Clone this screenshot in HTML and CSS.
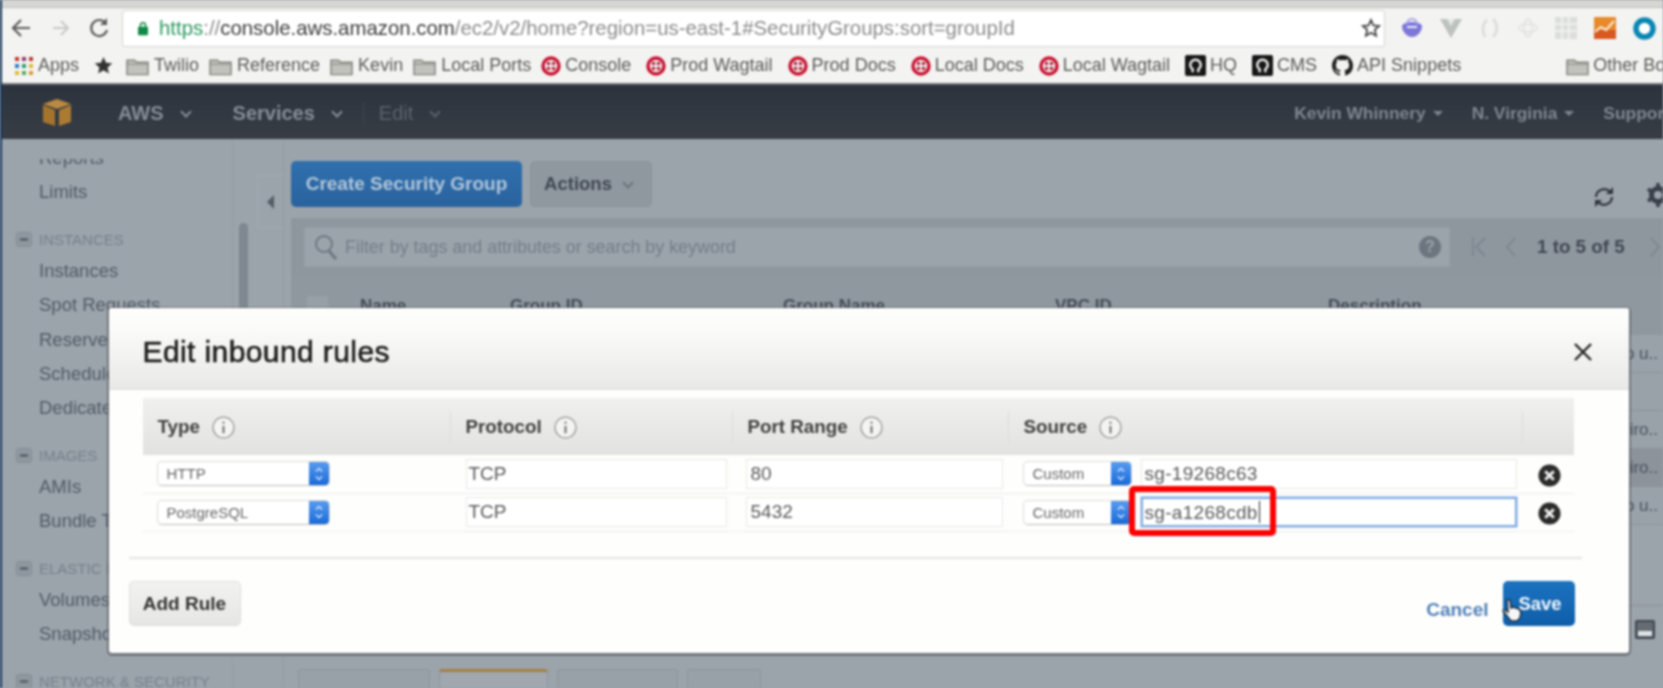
FILE: index.html
```html
<!DOCTYPE html>
<html lang="en">
<head>
  <meta charset="UTF-8" />
  <title>Security Groups | EC2 Management Console</title>
  <link rel="stylesheet" href="styles.css">
</head>
<body>
  <svg class="defs" width="0" height="0">
    <symbol id="folder" viewBox="0 0 24 20">
      <path d="M1 4h8l2 2h12v13H1z" fill="#c2c2bd" stroke="#85857f" stroke-width="1.5"/>
      <path d="M1 8h22" stroke="#85857f" stroke-width="1"/>
    </symbol>
    <symbol id="twilio" viewBox="0 0 20 20">
      <circle cx="10" cy="10" r="8" fill="#f4eeee" stroke="#c8102e" stroke-width="3.4"/>
      <circle cx="7.5" cy="7.5" r="1.7" fill="#a5142c"/>
      <circle cx="12.5" cy="7.5" r="1.7" fill="#a5142c"/>
      <circle cx="7.5" cy="12.5" r="1.7" fill="#a5142c"/>
      <circle cx="12.5" cy="12.5" r="1.7" fill="#a5142c"/>
    </symbol>
    <symbol id="hub" viewBox="0 0 22 22">
      <rect width="22" height="22" rx="2" fill="#161616"/>
      <path d="M8 18v-3a5.5 5.5 0 1 1 6 0v3" fill="none" stroke="#eee" stroke-width="2.6"/>
    </symbol>
    <symbol id="info" viewBox="0 0 22 22">
      <circle cx="11" cy="11" r="10" fill="#f4f4f2" stroke="#9a9a98" stroke-width="1.2"/>
      <path d="M11 5.5v2M11 9.5v7" stroke="#555" stroke-width="1.6"/>
    </symbol>
    <symbol id="remove" viewBox="0 0 24 24">
      <circle cx="12" cy="12" r="11.5" fill="#2b2b2b"/>
      <path d="M7.5 7.5l9 9M16.500 7.500l-9 9" stroke="#f2f2f2" stroke-width="3"/>
    </symbol>
    <symbol id="updown" viewBox="0 0 20 26">
      <path d="M6 10l4-4 4 4M6 16l4 4 4-4" fill="none" stroke="#cfe2fb" stroke-width="1.8"/>
    </symbol>
    <symbol id="minus" viewBox="0 0 16 15">
      <rect x=".5" y=".5" width="15" height="14" rx="2" fill="#8f979f" stroke="#848c95"/>
      <path d="M4 7.500h8" stroke="#4a515a" stroke-width="2"/>
    </symbol>
  </svg>

  <div class="tabstrip"></div>

  <div class="toolbar">
    <svg class="tool-icon" width="20" height="20" viewBox="0 0 20 20"><path d="M19 10H3M10 2l-8 8 8 8" fill="none" stroke="#5d5d5d" stroke-width="2.200"/></svg>
    <svg class="tool-icon fwd" width="18" height="20" viewBox="0 0 18 20"><path d="M1 10h15M9 3l7 7-7 7" fill="none" stroke="#c8c8c8" stroke-width="1.800"/></svg>
    <svg class="tool-icon reload" width="20" height="22" viewBox="0 0 20 22"><path d="M16.500 6A8 8 0 1 0 18 13" fill="none" stroke="#5d5d5d" stroke-width="2.200"/><path d="M18 1v7h-7z" fill="#5d5d5d"/></svg>
    <div class="address">
      <svg class="lock" width="10" height="15" viewBox="0 0 12 16"><rect y="6" width="12" height="10" rx="1" fill="#0f8a45"/><path d="M3 7V4a3 3 0 0 1 6 0v3" fill="none" stroke="#0f8a45" stroke-width="1.800"/></svg>
      <span class="url"><span class="url-green">https</span><span class="url-dim">://</span>console.aws.amazon.com<span class="url-dim">/ec2/v2/home?region=us-east-1#SecurityGroups:sort=groupId</span></span>
      <svg class="url-star" width="20" height="20" viewBox="0 0 20 20"><path d="M10 2l2.400 5.400 5.800.600-4.400 3.900 1.300 5.800L10 14.700l-5.100 3 1.300-5.800L1.800 8l5.800-.600z" fill="none" stroke="#444" stroke-width="1.800"/></svg>
    </div>
    <div class="extensions">
      <svg width="22" height="20" viewBox="0 0 22 20"><path d="M1 8a10 4 0 0 1 20 0c0 6-5 11-10 11S1 14 1 8z" fill="#7c78d8"/><path d="M6 9h10" stroke="#ece9fb" stroke-width="2"/><path d="M6 6a5 5 0 0 1 10 0" fill="none" stroke="#a7a3e6" stroke-width="2"/></svg>
      <svg width="22" height="20" viewBox="0 0 22 20"><path d="M0 1h22L11 20z" fill="#bcc2bf"/><path d="M7 1h8l-4 7z" fill="#e6e8e6"/></svg>
      <svg width="22" height="22" viewBox="0 0 22 22"><path d="M8 3C3 7 3 15 6 20M14 2c5 5 5 13 0 18" fill="none" stroke="#dcdfde" stroke-width="3"/></svg>
      <svg width="20" height="22" viewBox="0 0 20 22"><g fill="none" stroke="#e3e5e3" stroke-width="1.800"><ellipse cx="10" cy="11" rx="9" ry="4"/><ellipse cx="10" cy="11" rx="4" ry="9"/></g></svg>
      <svg width="22" height="22" viewBox="0 0 22 22"><rect width="22" height="22" fill="#dcdedc"/><path d="M0 7h22M0 14h22M7 0v22M14 0v22" stroke="#eeefee" stroke-width="2"/></svg>
      <svg width="22" height="22" viewBox="0 0 22 22"><rect width="22" height="22" rx="1" fill="#e8892a"/><rect y="13" width="22" height="9" fill="#d9581f"/><path d="M1 15l6-5 5 3 8-9" fill="none" stroke="#f5e8d0" stroke-width="2.200"/></svg>
      <svg width="23" height="23" viewBox="0 0 23 23"><circle cx="11.500" cy="11.500" r="8.500" fill="#fff" stroke="#0a86b4" stroke-width="5.500"/></svg>
    </div>
  </div>

  <div class="bookmarks">
    <span class="mark"><svg width="20" height="20" viewBox="0 0 20 20"><g><rect x="1" y="1" width="4" height="4" fill="#c0392b"/><rect x="8" y="1" width="4" height="4" fill="#8e3b6e"/><rect x="15" y="1" width="4" height="4" fill="#c0392b"/><rect x="1" y="8" width="4" height="4" fill="#2e7dbd"/><rect x="8" y="8" width="4" height="4" fill="#2f9e6e"/><rect x="15" y="8" width="4" height="4" fill="#e0b93b"/><rect x="1" y="15" width="4" height="4" fill="#e0b93b"/><rect x="8" y="15" width="4" height="4" fill="#5aa85a"/><rect x="15" y="15" width="4" height="4" fill="#e0973b"/></g></svg>Apps</span>
    <svg class="mark-star" width="19" height="19" viewBox="0 0 20 20"><path d="M10 1l2.700 6 6.500.700-4.900 4.300 1.400 6.400L10 15.100l-5.700 3.300 1.400-6.400L.8 7.700l6.500-.700z" fill="#333"/></svg>
    <span class="mark mark-folder"><svg width="23" height="20"><use href="#folder"/></svg>Twilio</span>
    <span class="mark mark-folder"><svg width="23" height="20"><use href="#folder"/></svg>Reference</span>
    <span class="mark mark-folder"><svg width="23" height="20"><use href="#folder"/></svg>Kevin</span>
    <span class="mark mark-folder"><svg width="23" height="20"><use href="#folder"/></svg>Local Ports</span>
    <span class="mark"><svg width="20" height="20"><use href="#twilio"/></svg>Console</span>
    <span class="mark"><svg width="20" height="20"><use href="#twilio"/></svg>Prod Wagtail</span>
    <span class="mark"><svg width="20" height="20"><use href="#twilio"/></svg>Prod Docs</span>
    <span class="mark"><svg width="20" height="20"><use href="#twilio"/></svg>Local Docs</span>
    <span class="mark"><svg width="20" height="20"><use href="#twilio"/></svg>Local Wagtail</span>
    <span class="mark"><svg width="21" height="21"><use href="#hub"/></svg>HQ</span>
    <span class="mark"><svg width="21" height="21"><use href="#hub"/></svg>CMS</span>
    <span class="mark"><svg width="21" height="21" viewBox="0 0 16 16"><path fill="#1d1d1d" d="M8 0C3.580 0 0 3.580 0 8c0 3.540 2.290 6.530 5.470 7.590.4.070.55-.170.55-.380 0-.190-.010-.820-.010-1.490-2.010.370-2.530-.490-2.690-.940-.090-.230-.480-.940-.820-1.130-.280-.150-.680-.520-.010-.530.630-.010 1.080.580 1.230.820.720 1.210 1.870.870 2.330.660.070-.520.280-.870.510-1.070-1.780-.200-3.640-.890-3.640-3.950 0-.870.310-1.590.820-2.150-.080-.200-.360-1.020.080-2.120 0 0 .670-.210 2.200.820.640-.180 1.320-.270 2-.270.680 0 1.360.090 2 .270 1.530-1.040 2.200-.820 2.200-.820.440 1.100.160 1.920.080 2.120.510.560.820 1.270.820 2.150 0 3.070-1.870 3.750-3.650 3.950.290.250.540.730.540 1.480 0 1.070-.010 1.930-.010 2.200 0 .210.150.460.550.380A8.013 8.013 0 0 0 16 8c0-4.420-3.580-8-8-8z"/></svg>API Snippets</span>
    <span class="mark mark-other"><svg width="23" height="20"><use href="#folder"/></svg>Other Bookmarks</span>
  </div>

  <div class="navbar">
    <svg class="logo" width="30" height="27" viewBox="0 0 30 27"><path d="M1 5l14-5 14 5-14 5z" fill="#b98a43"/><path d="M1 6l12 5v16L1 23z" fill="#a5742c"/><path d="M29 6l-12 5v16l12-4z" fill="#ab7b33"/></svg>
    <span class="nav-item nav-aws">AWS<i class="caret"></i></span>
    <span class="nav-item nav-services">Services<i class="caret"></i></span>
    <span class="nav-item nav-edit">Edit<i class="caret"></i></span>
    <span class="nav-right">Kevin Whinnery<i class="tri"></i></span>
    <span class="nav-right">N. Virginia<i class="tri"></i></span>
    <span class="nav-right">Support</span>
  </div>

  <div class="console">
    <div class="sidebar">
      <div class="side-scroll">
        <div class="side-inner">
          <div class="side-link">Reports</div>
          <div class="side-link">Limits</div>
          <div class="side-group"><svg width="16" height="15"><use href="#minus"/></svg>INSTANCES</div>
          <div class="side-link">Instances</div>
          <div class="side-link">Spot Requests</div>
          <div class="side-link">Reserved Instances</div>
          <div class="side-link">Scheduled Instances</div>
          <div class="side-link">Dedicated Hosts</div>
          <div class="side-group"><svg width="16" height="15"><use href="#minus"/></svg>IMAGES</div>
          <div class="side-link">AMIs</div>
          <div class="side-link">Bundle Tasks</div>
          <div class="side-group"><svg width="16" height="15"><use href="#minus"/></svg>ELASTIC BLOCK STORE</div>
          <div class="side-link">Volumes</div>
          <div class="side-link">Snapshots</div>
          <div class="side-group"><svg width="16" height="15"><use href="#minus"/></svg>NETWORK &amp; SECURITY</div>
        </div>
      </div>
      <div class="side-bar"></div>
    </div>
    <div class="handle"><i></i></div>
    <div class="main">
      <div class="actions">
        <button class="btn-create">Create Security Group</button>
        <button class="btn-actions">Actions<i class="caret caret-dark"></i></button>
        <svg class="refresh" width="26" height="26" viewBox="0 0 26 26"><path d="M5 13a8 8 0 0 1 14-5M21 13a8 8 0 0 1-14 5" fill="none" stroke="#30363e" stroke-width="2.200"/><path d="M22 3v7h-7zM4 23v-7h7z" fill="#30363e"/></svg>
        <svg class="gear" width="22" height="24" viewBox="0 0 22 24"><circle cx="11" cy="12" r="6.500" fill="none" stroke="#3a4049" stroke-width="5"/><path d="M11 0v5M11 19v5M1 6l4 3M17 15l4 3M1 18l4-3M17 9l4-3" stroke="#3a4049" stroke-width="3.500"/></svg>
      </div>
      <div class="filter">
        <div class="filter-box">
          <svg width="24" height="28" viewBox="0 0 24 28"><circle cx="10" cy="11" r="8" fill="none" stroke="#6f7780" stroke-width="2"/><path d="M15 18l7 8" stroke="#6f7780" stroke-width="3"/></svg>
          <span class="filter-text">Filter by tags and attributes or search by keyword</span>
          <span class="help">?</span>
        </div>
        <div class="pager">
          <svg class="pager-first" width="14" height="24" viewBox="0 0 14 24"><path d="M1 3v18M13 3L4 12l9 9" fill="none" stroke="#7d858e" stroke-width="1.800"/></svg>
          <svg class="pager-prev" width="10" height="24" viewBox="0 0 10 24"><path d="M9 3L1 12l8 9" fill="none" stroke="#7d858e" stroke-width="1.800"/></svg>
          <span class="pager-count">1 to 5 of 5</span>
          <svg width="10" height="24" viewBox="0 0 10 24"><path d="M1 3l8 9-8 9" fill="none" stroke="#7d858e" stroke-width="1.800"/></svg>
        </div>
      </div>
      <div class="groups">
        <div class="groups-head">
          <span><i class="checkbox"></i></span><span>Name</span><span>Group ID</span><span>Group Name</span><span>VPC ID</span><span>Description</span>
        </div>
        <div class="groups-row">launch-wizard setup u..</div>
        <div class="groups-row"></div>
        <div class="groups-row">default VPC enviro..</div>
        <div class="groups-row groups-row-dark">default VPC enviro..</div>
        <div class="groups-row">launch-wizard setup u..</div>
      </div>
      <div class="detail">
        <div class="tabs">
          <span class="tab tab-desc">Description</span>
          <span class="tab tab-on">Inbound</span>
          <span class="tab tab-out">Outbound</span>
          <span class="tab tab-tags">Tags</span>
        </div>
        <svg class="split-icon" width="20" height="19" viewBox="0 0 20 19"><rect x="1" y="1" width="18" height="17" rx="1" fill="#666c74" stroke="#3f454d" stroke-width="2"/><rect x="3" y="11" width="14" height="5" fill="#dfe2e4"/></svg>
      </div>
    </div>
  </div>

  <div class="modal">
    <div class="modal-head">
      <h1>Edit inbound rules</h1>
      <svg class="modal-x" width="20" height="20" viewBox="0 0 20 20"><path d="M2 2l16 16M18 2L2 18" stroke="#222" stroke-width="2.400"/></svg>
    </div>
    <div class="rules">
      <div class="rules-head">
        <div class="cell">Type <svg width="23" height="23"><use href="#info"/></svg></div>
        <div class="cell">Protocol <svg width="23" height="23"><use href="#info"/></svg></div>
        <div class="cell">Port Range <svg width="23" height="23"><use href="#info"/></svg></div>
        <div class="cell">Source <svg width="23" height="23"><use href="#info"/></svg></div>
        <div class="cell"></div>
      </div>
      <div class="rule">
        <div class="col-type"><span class="select select-type">HTTP<b><svg width="16" height="22"><use href="#updown"/></svg></b></span></div>
        <div class="col-proto"><span class="input">TCP</span></div>
        <div class="col-port"><span class="input">80</span></div>
        <div class="col-source"><span class="select select-src">Custom<b><svg width="16" height="22"><use href="#updown"/></svg></b></span><span class="input">sg-19268c63</span></div>
        <div class="col-remove"><svg width="23" height="23"><use href="#remove"/></svg></div>
      </div>
      <div class="rule">
        <div class="col-type"><span class="select select-type">PostgreSQL<b><svg width="16" height="22"><use href="#updown"/></svg></b></span></div>
        <div class="col-proto"><span class="input">TCP</span></div>
        <div class="col-port"><span class="input">5432</span></div>
        <div class="col-source"><span class="select select-src">Custom<b><svg width="16" height="22"><use href="#updown"/></svg></b></span><span class="input input-focus">sg-a1268cdb<i class="text-cursor"></i></span></div>
        <div class="col-remove"><svg width="23" height="23"><use href="#remove"/></svg></div>
      </div>
    </div>
    <div class="divider"></div>
    <div class="modal-foot">
      <button class="btn-add">Add Rule</button>
      <span class="cancel">Cancel</span>
      <button class="btn-save">Save</button>
    </div>
    <div class="highlight"></div>
    <svg class="hand" width="22" height="24" viewBox="0 0 22 24"><path d="M5 2c1-1 3 0 3 1l1 7 2-1 3 1 3 1 2 3-1 6-3 3H9l-4-5-4-5c0-1 1-2 2-1l3 2z" fill="#f6f6f6" stroke="#1b2b3c" stroke-width="1.500"/></svg>
  </div>
</body>
</html>
```

FILE: styles.css
```css
* {
  box-sizing: border-box;
}
html {
  overflow: hidden;
}
body {
  margin: 0;
  height: 688px;
  overflow: hidden;
  position: relative;
  border-left: 2px solid #1c3a5e;
  background-color: #9ba3ab;
  font-family: "Liberation Sans", Arial, sans-serif;
  filter: blur(0.8px);
  display: flex;
  flex-direction: column;
}
button {
  font-family: inherit;
  border: none;
  padding: 0;
}
.defs {
  position: absolute;
}

/* browser chrome */
.tabstrip {
  height: 8px;
  flex: none;
  background-color: #d6d6d4;
  border-bottom: 1px solid #bdbdbb;
}
.toolbar {
  height: 40px;
  flex: none;
  display: flex;
  align-items: center;
  padding-left: 9px;
  background-color: #f3f3f2;
}
.tool-icon {
  flex: none;
}
.fwd {
  margin-left: 21px;
}
.reload {
  margin-left: 19px;
}
.address {
  width: 1263px;
  height: 37px;
  margin-left: 13px;
  display: flex;
  align-items: center;
  padding: 0 3px 0 15px;
  background-color: #fff;
  border: 1px solid #d4d4d2;
  border-radius: 3px;
  flex: none;
}
.lock {
  flex: none;
}
.url {
  margin-left: 11px;
  font-size: 20.400px;
  color: #3c3c3c;
  white-space: nowrap;
}
.url-green {
  color: #2f9a63;
}
.url-dim {
  color: #8c8c8c;
}
.url-star {
  margin-left: auto;
}
.extensions {
  display: flex;
  align-items: center;
  gap: 17px;
  margin-left: 16px;
  flex: none;
}

/* bookmarks */
.bookmarks {
  height: 37px;
  flex: none;
  display: flex;
  align-items: center;
  gap: 15px;
  padding-left: 12px;
  background-color: #f3f3f2;
  border-bottom: 2px solid #6f7377;
  font-size: 18px;
  color: #5a5a5a;
  white-space: nowrap;
  overflow: hidden;
}
.mark {
  display: flex;
  align-items: center;
  gap: 4px;
  flex: none;
}
.mark-folder {
  gap: 5px;
  margin-right: -5px;
}
.mark-star {
  flex: none;
  margin-right: -2px;
}
.mark-other {
  margin-left: 90px;
}

/* aws nav */
.navbar {
  height: 54px;
  flex: none;
  display: flex;
  align-items: center;
  padding-top: 3px;
  background: linear-gradient(#2c333d, #383d45);
  white-space: nowrap;
  overflow: hidden;
}
.logo {
  margin: -3px 0 0 40px;
  flex: none;
}
.nav-item {
  font-size: 20px;
  font-weight: bold;
  color: #858d96;
  display: flex;
  align-items: center;
}
.nav-aws {
  margin-left: 46px;
}
.nav-services {
  margin-left: 43px;
}
.nav-edit {
  margin-left: 22px;
  padding-left: 15px;
  border-left: 1px solid #3f454d;
  font-weight: normal;
  color: #5a626b;
}
.caret {
  width: 8px;
  height: 8px;
  margin: -4px 0 0 18px;
  border-right: 2px solid currentColor;
  border-bottom: 2px solid currentColor;
  transform: rotate(45deg);
}
.caret-dark {
  margin-left: 12px;
  color: #6d747d;
  display: inline-block;
  vertical-align: 3px;
}
.nav-right {
  font-size: 17.400px;
  font-weight: bold;
  color: #7e868f;
  display: flex;
  align-items: center;
}
.nav-edit + .nav-right {
  margin-left: auto;
}
.nav-right + .nav-right {
  margin-left: 29px;
}
.nav-right:last-child {
  margin-right: -7px;
}
.tri {
  margin-left: 7px;
  border-left: 5px solid transparent;
  border-right: 5px solid transparent;
  border-top: 5px solid #7e868f;
}

/* dimmed console behind the modal */
.console {
  flex: 1;
  min-height: 0;
  display: flex;
  background-color: #9ba3ab;
}
.sidebar {
  width: 231px;
  flex: none;
  display: flex;
  position: relative;
  border-right: 1px solid #949ca4;
}
.side-scroll {
  flex: 1;
  margin-top: 20px;
  overflow: hidden;
  white-space: nowrap;
}
.side-inner {
  margin-top: -18px;
  padding-left: 37px;
}
.side-link {
  height: 34.400px;
  line-height: 34px;
  font-size: 18.500px;
  color: #525a64;
}
.side-group {
  height: 28px;
  margin: 16px 0 0 -23px;
  display: flex;
  align-items: center;
  gap: 7px;
  font-size: 15px;
  color: #78808a;
}
.side-bar {
  position: absolute;
  left: 237px;
  top: 84px;
  width: 9px;
  height: 200px;
  border-radius: 5px;
  background-color: #7f8790;
}
.handle {
  width: 26px;
  height: 53px;
  margin: 36px 0 0 24px;
  flex: none;
  display: flex;
  align-items: center;
  justify-content: center;
  border: 1px solid #a3abb2;
  border-right: none;
}
.handle i {
  border-top: 7px solid transparent;
  border-bottom: 7px solid transparent;
  border-right: 7px solid #545c66;
}
.main {
  flex: 1;
  min-width: 0;
  display: flex;
  flex-direction: column;
  padding-left: 7px;
  border-left: 1px solid #939ba3;
}
.actions {
  margin-top: 22px;
  height: 46px;
  flex: none;
  display: flex;
  align-items: center;
}
.btn-create {
  width: 231px;
  height: 46px;
  border-radius: 5px;
  background: linear-gradient(#2f70ad, #2a639f);
  color: #b3c6da;
  font-size: 19px;
  font-weight: bold;
}
.btn-actions {
  width: 122px;
  height: 46px;
  margin-left: 8px;
  padding-right: 6px;
  border-radius: 5px;
  background-color: #8f979f;
  border: 1px solid #8a929a;
  color: #414852;
  font-size: 18.500px;
  font-weight: bold;
}
.refresh {
  margin: 26px 0 0 auto;
  flex: none;
}
.gear {
  margin: 22px -6px 0 30px;
  flex: none;
}
.filter {
  margin-top: 11px;
  height: 58px;
  flex: none;
  display: flex;
  align-items: center;
  padding-left: 13px;
  background-color: #8e969e;
  white-space: nowrap;
}
.filter-box {
  width: 1146px;
  height: 40px;
  flex: none;
  display: flex;
  align-items: center;
  padding: 0 8px 0 9px;
  background-color: #9ba3ab;
  border: 1px solid #959da5;
}
.filter-text {
  margin-left: 7px;
  font-size: 17.900px;
  color: #757e87;
}
.help {
  margin-left: auto;
  width: 22px;
  height: 22px;
  border-radius: 50%;
  background-color: #6d757e;
  color: #9ba3ab;
  font-size: 16px;
  font-weight: bold;
  text-align: center;
  line-height: 22px;
}
.pager {
  display: flex;
  align-items: center;
  margin-left: 22px;
  flex: none;
}
.pager-prev {
  margin-left: 20px;
}
.pager-count {
  font-size: 18.800px;
  font-weight: bold;
  color: #414852;
  margin: 0 25px 0 21px;
}
.groups {
  flex: 1;
  min-height: 0;
  overflow: hidden;
  background-color: #9ba3ab;
}
.groups-head {
  height: 59px;
  display: grid;
  grid-template-columns: 69px 150px 273px 272px 273px 1fr;
  align-items: center;
  padding-top: 1px;
  background-color: #8f979f;
  font-size: 17px;
  font-weight: bold;
  color: #454c56;
  white-space: nowrap;
}
.checkbox {
  display: block;
  width: 21px;
  height: 21px;
  margin-left: 16px;
  background-color: #979fa7;
  border-radius: 2px;
}
.groups-row {
  height: 38px;
  padding-right: 5px;
  border-bottom: 1px solid #8b939b;
  background-color: #99a1a9;
  text-align: right;
  line-height: 37px;
  font-size: 17px;
  color: #4a515b;
  white-space: nowrap;
}
.groups-row-dark {
  background-color: #8c939b;
}
.detail {
  height: 83px;
  flex: none;
  display: flex;
  border-top: 1px solid #8a9199;
  padding-left: 7px;
  overflow: hidden;
}
.tabs {
  display: flex;
  gap: 9px;
  margin-top: 63px;
}
.tab {
  height: 40px;
  border-radius: 3px 3px 0 0;
  background-color: #98a0a8;
  border: 1px solid #8c949c;
  padding-top: 15px;
  font-size: 17px;
  color: #454c56;
  text-align: center;
}
.tab-desc {
  width: 132px;
}
.tab-on {
  width: 109px;
  background-color: #a0a7af;
  border-top: 3px solid #a57f45;
}
.tab-out {
  width: 121px;
}
.tab-tags {
  width: 74px;
}
.split-icon {
  flex: none;
  margin: 14px 8px 0 auto;
}

/* modal */
.modal {
  position: absolute;
  left: 106.500px;
  top: 308px;
  width: 1520px;
  height: 345px;
  background-color: #fefefc;
  border-radius: 3px;
  box-shadow: 0 1px 0 2px rgba(80, 85, 90, 0.55);
}
.modal-head {
  height: 82px;
  display: flex;
  align-items: center;
  justify-content: space-between;
  padding: 8px 36px 0 34px;
  background: linear-gradient(#fefefc, #fbfbf9 25%, #e9e9e7);
  border-bottom: 2px solid #e3e3e1;
  border-radius: 3px 3px 0 0;
}
.modal-head h1 {
  margin: 0;
  font-size: 30px;
  font-weight: normal;
  letter-spacing: 0.4px;
  color: #1c1c1c;
  -webkit-text-stroke: 0.6px #1c1c1c;
}
.rules {
  margin: 8px 55px 0 34px;
}
.rules-head,
.rule {
  display: grid;
  grid-template-columns: 308px 282px 276px 514px 51px;
}
.rules-head {
  height: 57px;
  padding-top: 1px;
  background: linear-gradient(#f0f0ee, #e2e2e0);
  font-size: 18.800px;
  font-weight: bold;
  color: #3f3f3f;
}
.cell {
  display: flex;
  align-items: center;
  gap: 12px;
  margin: 12px 0;
  padding-left: 15px;
  border-right: 1px solid #dcdcda;
  white-space: nowrap;
}
.cell:last-child {
  border-right: none;
}
.rule {
  height: 38.500px;
  align-items: center;
  border-bottom: 1px solid #ecece9;
}
.select {
  height: 25px;
  display: flex;
  align-items: center;
  justify-content: space-between;
  padding-left: 9px;
  background-color: #fff;
  border: 1px solid #dcdcda;
  border-bottom-color: #bcbcba;
  border-radius: 5px;
  font-size: 15px;
  color: #666;
  overflow: hidden;
  flex: none;
}
.select b {
  width: 20px;
  height: 25px;
  display: flex;
  align-items: center;
  justify-content: center;
  background: linear-gradient(#5b9df0, #1668d8);
}
.select-type {
  width: 173px;
}
.select-src {
  width: 109px;
}
.input {
  display: block;
  height: 30px;
  line-height: 27px;
  padding-left: 2px;
  background-color: #fff;
  border: 1px solid #e8e8e6;
  font-size: 19px;
  color: #5a5a5a;
}
.col-type {
  padding-left: 14px;
}
.col-proto {
  padding: 0 6px 0 15px;
}
.col-port {
  padding: 0 6px 0 13px;
}
.col-port .input {
  padding-left: 4px;
}
.col-source {
  display: flex;
  align-items: center;
  gap: 9px;
  padding: 0 6px 0 14px;
}
.col-source .input {
  flex: 1;
  padding-left: 3px;
  letter-spacing: 0.3px;
}
.col-remove {
  display: flex;
  padding: 3px 0 0 15px;
}
.col-source .input-focus {
  border: 2px solid #7fa9e2;
  box-shadow: 0 0 0 1px #c3d8f4;
  display: flex;
  align-items: center;
  padding-left: 2px;
}
.text-cursor {
  width: 1px;
  height: 22px;
  margin-left: 1px;
  background-color: #222;
}
.divider {
  height: 2px;
  margin: 25px 47px 0 20px;
  background-color: #e4e4e2;
}
.modal-foot {
  margin: 22px 54px 0 20px;
  height: 45px;
  display: flex;
  align-items: center;
}
.btn-add {
  width: 112px;
  height: 45px;
  border-radius: 5px;
  border: 1px solid #dededc;
  background: linear-gradient(#f2f2f0, #e6e6e4);
  font-size: 19px;
  font-weight: bold;
  color: #333;
}
.cancel {
  margin: 12px 0 0 auto;
  font-size: 19px;
  font-weight: bold;
  color: #4f80b9;
}
.btn-save {
  width: 72px;
  height: 45px;
  margin-left: 14px;
  padding-left: 3px;
  border-radius: 5px;
  background: linear-gradient(#1c73c0, #0f5ea9);
  color: #f4f8fc;
  font-size: 18.500px;
  font-weight: bold;
}
.highlight {
  position: absolute;
  left: 1020.500px;
  top: 178px;
  width: 147px;
  height: 50px;
  border: 6px solid #f00;
  border-radius: 5px;
}
.hand {
  position: absolute;
  left: 1393px;
  top: 290px;
}
.modal-x {
  flex: none;
}
```
